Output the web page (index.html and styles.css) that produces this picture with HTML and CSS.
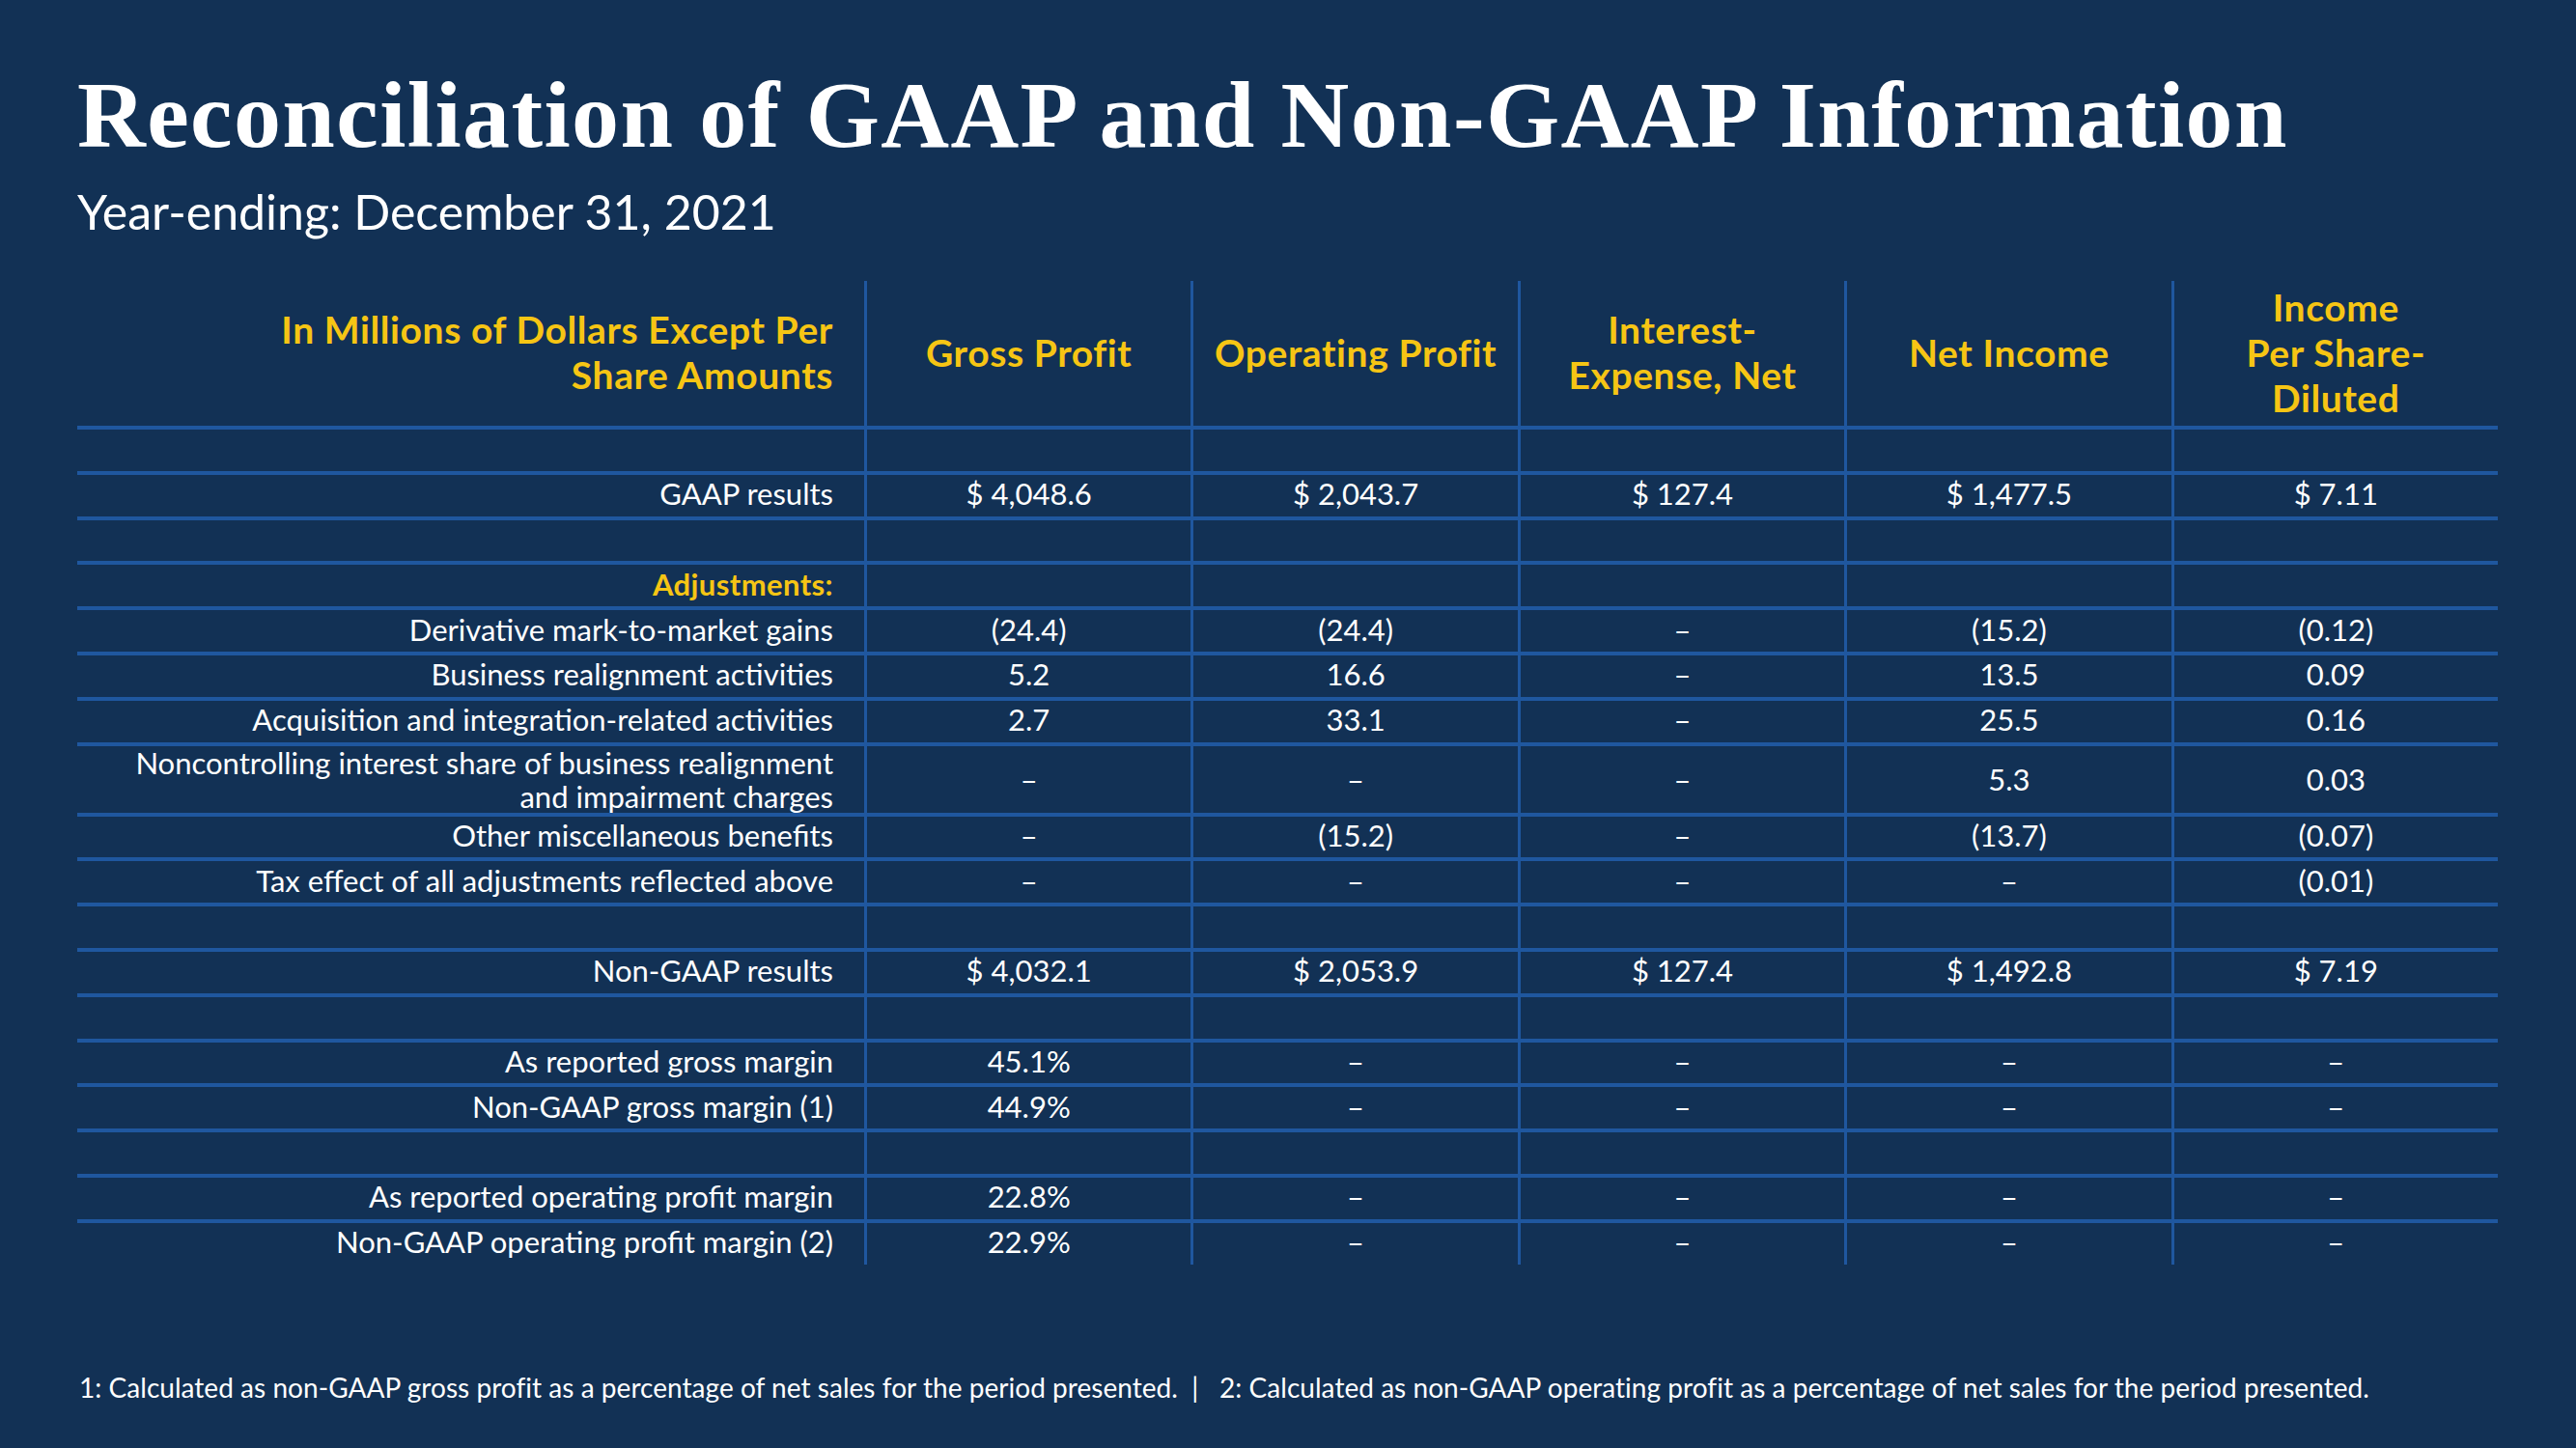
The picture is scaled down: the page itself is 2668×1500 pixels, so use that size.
FILE: index.html
```html
<!DOCTYPE html>
<html lang="en">
<head>
<meta charset="utf-8">
<title>Reconciliation of GAAP and Non-GAAP Information</title>
<link rel="stylesheet" href="styles.css">
</head>
<body>
<main class="slide">
  <h1 class="title">Reconciliation of GAAP and Non-GAAP Information</h1>
  <p class="subtitle">Year-ending: December 31, 2021</p>

  <div class="table">
    <div class="row head">
      <div class="cell label">In Millions of Dollars Except Per<br>Share Amounts</div>
      <div class="cell">Gross Profit</div>
      <div class="cell">Operating Profit</div>
      <div class="cell">Interest-<br>Expense, Net</div>
      <div class="cell">Net Income</div>
      <div class="cell">Income<br>Per Share-<br>Diluted</div>
    </div>

    <div class="row"><div class="cell label"></div><div class="cell"></div><div class="cell"></div><div class="cell"></div><div class="cell"></div><div class="cell"></div></div>
    <div class="row"><div class="cell label">GAAP results</div><div class="cell">$ 4,048.6</div><div class="cell">$ 2,043.7</div><div class="cell">$ 127.4</div><div class="cell">$ 1,477.5</div><div class="cell">$ 7.11</div></div>
    <div class="row"><div class="cell label"></div><div class="cell"></div><div class="cell"></div><div class="cell"></div><div class="cell"></div><div class="cell"></div></div>
    <div class="row"><div class="cell label accent">Adjustments:</div><div class="cell"></div><div class="cell"></div><div class="cell"></div><div class="cell"></div><div class="cell"></div></div>
    <div class="row"><div class="cell label">Derivative mark-to-market gains</div><div class="cell">(24.4)</div><div class="cell">(24.4)</div><div class="cell">–</div><div class="cell">(15.2)</div><div class="cell">(0.12)</div></div>
    <div class="row"><div class="cell label">Business realignment activities</div><div class="cell">5.2</div><div class="cell">16.6</div><div class="cell">–</div><div class="cell">13.5</div><div class="cell">0.09</div></div>
    <div class="row"><div class="cell label">Acquisition and integration-related activities</div><div class="cell">2.7</div><div class="cell">33.1</div><div class="cell">–</div><div class="cell">25.5</div><div class="cell">0.16</div></div>
    <div class="row tall"><div class="cell label">Noncontrolling interest share of business realignment<br>and impairment charges</div><div class="cell">–</div><div class="cell">–</div><div class="cell">–</div><div class="cell">5.3</div><div class="cell">0.03</div></div>
    <div class="row"><div class="cell label">Other miscellaneous benefits</div><div class="cell">–</div><div class="cell">(15.2)</div><div class="cell">–</div><div class="cell">(13.7)</div><div class="cell">(0.07)</div></div>
    <div class="row"><div class="cell label">Tax effect of all adjustments reflected above</div><div class="cell">–</div><div class="cell">–</div><div class="cell">–</div><div class="cell">–</div><div class="cell">(0.01)</div></div>
    <div class="row"><div class="cell label"></div><div class="cell"></div><div class="cell"></div><div class="cell"></div><div class="cell"></div><div class="cell"></div></div>
    <div class="row"><div class="cell label">Non-GAAP results</div><div class="cell">$ 4,032.1</div><div class="cell">$ 2,053.9</div><div class="cell">$ 127.4</div><div class="cell">$ 1,492.8</div><div class="cell">$ 7.19</div></div>
    <div class="row"><div class="cell label"></div><div class="cell"></div><div class="cell"></div><div class="cell"></div><div class="cell"></div><div class="cell"></div></div>
    <div class="row"><div class="cell label">As reported gross margin</div><div class="cell">45.1%</div><div class="cell">–</div><div class="cell">–</div><div class="cell">–</div><div class="cell">–</div></div>
    <div class="row"><div class="cell label">Non-GAAP gross margin (1)</div><div class="cell">44.9%</div><div class="cell">–</div><div class="cell">–</div><div class="cell">–</div><div class="cell">–</div></div>
    <div class="row"><div class="cell label"></div><div class="cell"></div><div class="cell"></div><div class="cell"></div><div class="cell"></div><div class="cell"></div></div>
    <div class="row"><div class="cell label">As reported operating profit margin</div><div class="cell">22.8%</div><div class="cell">–</div><div class="cell">–</div><div class="cell">–</div><div class="cell">–</div></div>
    <div class="row"><div class="cell label">Non-GAAP operating profit margin (2)</div><div class="cell">22.9%</div><div class="cell">–</div><div class="cell">–</div><div class="cell">–</div><div class="cell">–</div></div>
  </div>

  <p class="footnote">1: Calculated as non-GAAP gross profit as a percentage of net sales for the period presented.&nbsp; |&nbsp;&nbsp; 2: Calculated as non-GAAP operating profit as a percentage of net sales for the period presented.</p>
</main>
</body>
</html>
```

FILE: styles.css
```css
html, body {
  margin: 0;
  padding: 0;
  background: #123155;
}

.slide {
  width: 2668px;
  height: 1500px;
  box-sizing: border-box;
  padding: 70px 0 0 80px;
  color: #ffffff;
  font-family: Lato, "Open Sans", sans-serif;
  overflow: hidden;
}

.title {
  margin: 0;
  font-family: "Liberation Serif", "Times New Roman", serif;
  font-weight: 700;
  font-size: 98px;
  line-height: 1;
  letter-spacing: 1.4px;
  white-space: nowrap;
}

.subtitle {
  margin: 26px 0 0 0;
  font-size: 50px;
  font-weight: 400;
  line-height: 1;
}

.table {
  margin-top: 47px;
  width: 2507px;
}

.row {
  display: grid;
  grid-template-columns: 815px repeat(5, 1fr);
  height: 46.8px;
  box-sizing: border-box;
  border-top: 4px solid #1f579f;
}

.row.tall {
  height: 73px;
}

.row.head {
  height: 150px;
  border-top: none;
  color: #f6c514;
  font-weight: 700;
}

.cell {
  display: flex;
  align-items: center;
  justify-content: center;
  text-align: center;
  box-sizing: border-box;
  padding-bottom: 3px;
  font-size: 31px;
  line-height: 35px;
  border-left: 3px solid #1f579f;
}

.head .cell {
  padding-bottom: 2px;
  font-size: 39px;
  line-height: 47px;
  letter-spacing: 0.6px;
}

.cell.label {
  border-left: none;
  justify-content: flex-end;
  text-align: right;
  padding-right: 32px;
}

.cell.accent {
  color: #f6c514;
  font-weight: 700;
  letter-spacing: 0.4px;
}

.footnote {
  margin: 113px 0 0 2px;
  font-size: 28px;
  letter-spacing: 0.04px;
  line-height: 1;
  white-space: nowrap;
}
```
